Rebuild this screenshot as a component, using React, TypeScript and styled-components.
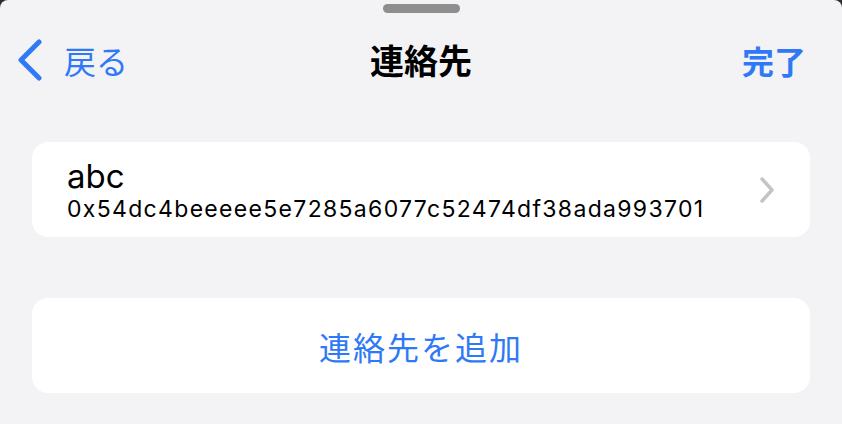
import React from "react";
import styled, { createGlobalStyle } from "styled-components";

const GlobalStyle = createGlobalStyle`
  html, body {
    margin: 0;
    padding: 0;
    background: #2c2c2e;
  }
  * {
    box-sizing: border-box;
  }
`;

const blue = "#3079f6";

const Sheet = styled.div`
  width: 842px;
  height: 424px;
  background: #f3f3f6;
  border-radius: 8px 8px 0 0;
  overflow: hidden;
  font-family: Inter, "Noto Sans CJK JP", sans-serif;
  display: flex;
  flex-direction: column;
`;

const GrabberRow = styled.div`
  display: flex;
  justify-content: center;
  padding-top: 4px;
`;

const Grabber = styled.div`
  width: 77px;
  height: 9px;
  border-radius: 5px;
  background: #8e8e8e;
`;

const NavBar = styled.div`
  height: 94px;
  display: grid;
  grid-template-columns: 1fr auto 1fr;
  align-items: center;
  padding: 0 17px;
`;

const BackButton = styled.div`
  display: flex;
  align-items: center;
  gap: 21px;
  color: ${blue};
  font-family: "Noto Sans CJK JP", sans-serif;
  font-size: 32px;
  line-height: 1;
`;

const Title = styled.div`
  font-family: "Noto Sans CJK JP", sans-serif;
  font-size: 34px;
  font-weight: 700;
  color: #000;
  line-height: 1;
`;

const DoneButton = styled.div`
  justify-self: end;
  padding-right: 19px;
  font-family: "Noto Sans CJK JP", sans-serif;
  font-size: 32px;
  font-weight: 600;
  color: ${blue};
  line-height: 1;
`;

const Content = styled.div`
  display: flex;
  flex-direction: column;
  gap: 61px;
  padding: 35px 32px 0;
`;

const Card = styled.div<{ $center?: boolean }>`
  height: 95px;
  background: #fff;
  border-radius: 16px;
  display: flex;
  align-items: center;
  justify-content: ${({ $center }) => ($center ? "center" : "space-between")};
  padding: 0 35px;
`;

const ContactInfo = styled.div`
  display: flex;
  flex-direction: column;
`;

const ContactName = styled.div`
  font-size: 33px;
  line-height: 38px;
  color: #000;
`;

const ContactAddress = styled.div`
  font-size: 23px;
  line-height: 28px;
  letter-spacing: 1.32px;
  color: #000;
`;

const AddLabel = styled.div`
  font-family: "Noto Sans CJK JP", sans-serif;
  font-size: 32px;
  letter-spacing: 2px;
  color: ${blue};
`;

export default function App() {
  return (
    <>
      <GlobalStyle />
      <Sheet>
        <GrabberRow>
          <Grabber />
        </GrabberRow>
        <NavBar>
          <BackButton>
            <svg width="26" height="42" viewBox="0 0 26 42">
              <path d="M22 3 L4 21 L22 39" fill="none" stroke={blue} strokeWidth="5" strokeLinecap="round" strokeLinejoin="round" />
            </svg>
            <span>戻る</span>
          </BackButton>
          <Title>連絡先</Title>
          <DoneButton>完了</DoneButton>
        </NavBar>
        <Content>
          <Card>
            <ContactInfo>
              <ContactName>abc</ContactName>
              <ContactAddress>0x54dc4beeeee5e7285a6077c52474df38ada993701</ContactAddress>
            </ContactInfo>
            <svg width="16" height="26" viewBox="0 0 16 26">
              <path d="M3 2 L13 13 L3 24" fill="none" stroke="#c4c4c7" strokeWidth="3.5" strokeLinecap="round" strokeLinejoin="round" />
            </svg>
          </Card>
          <Card $center>
            <AddLabel>連絡先を追加</AddLabel>
          </Card>
        </Content>
      </Sheet>
    </>
  );
}
